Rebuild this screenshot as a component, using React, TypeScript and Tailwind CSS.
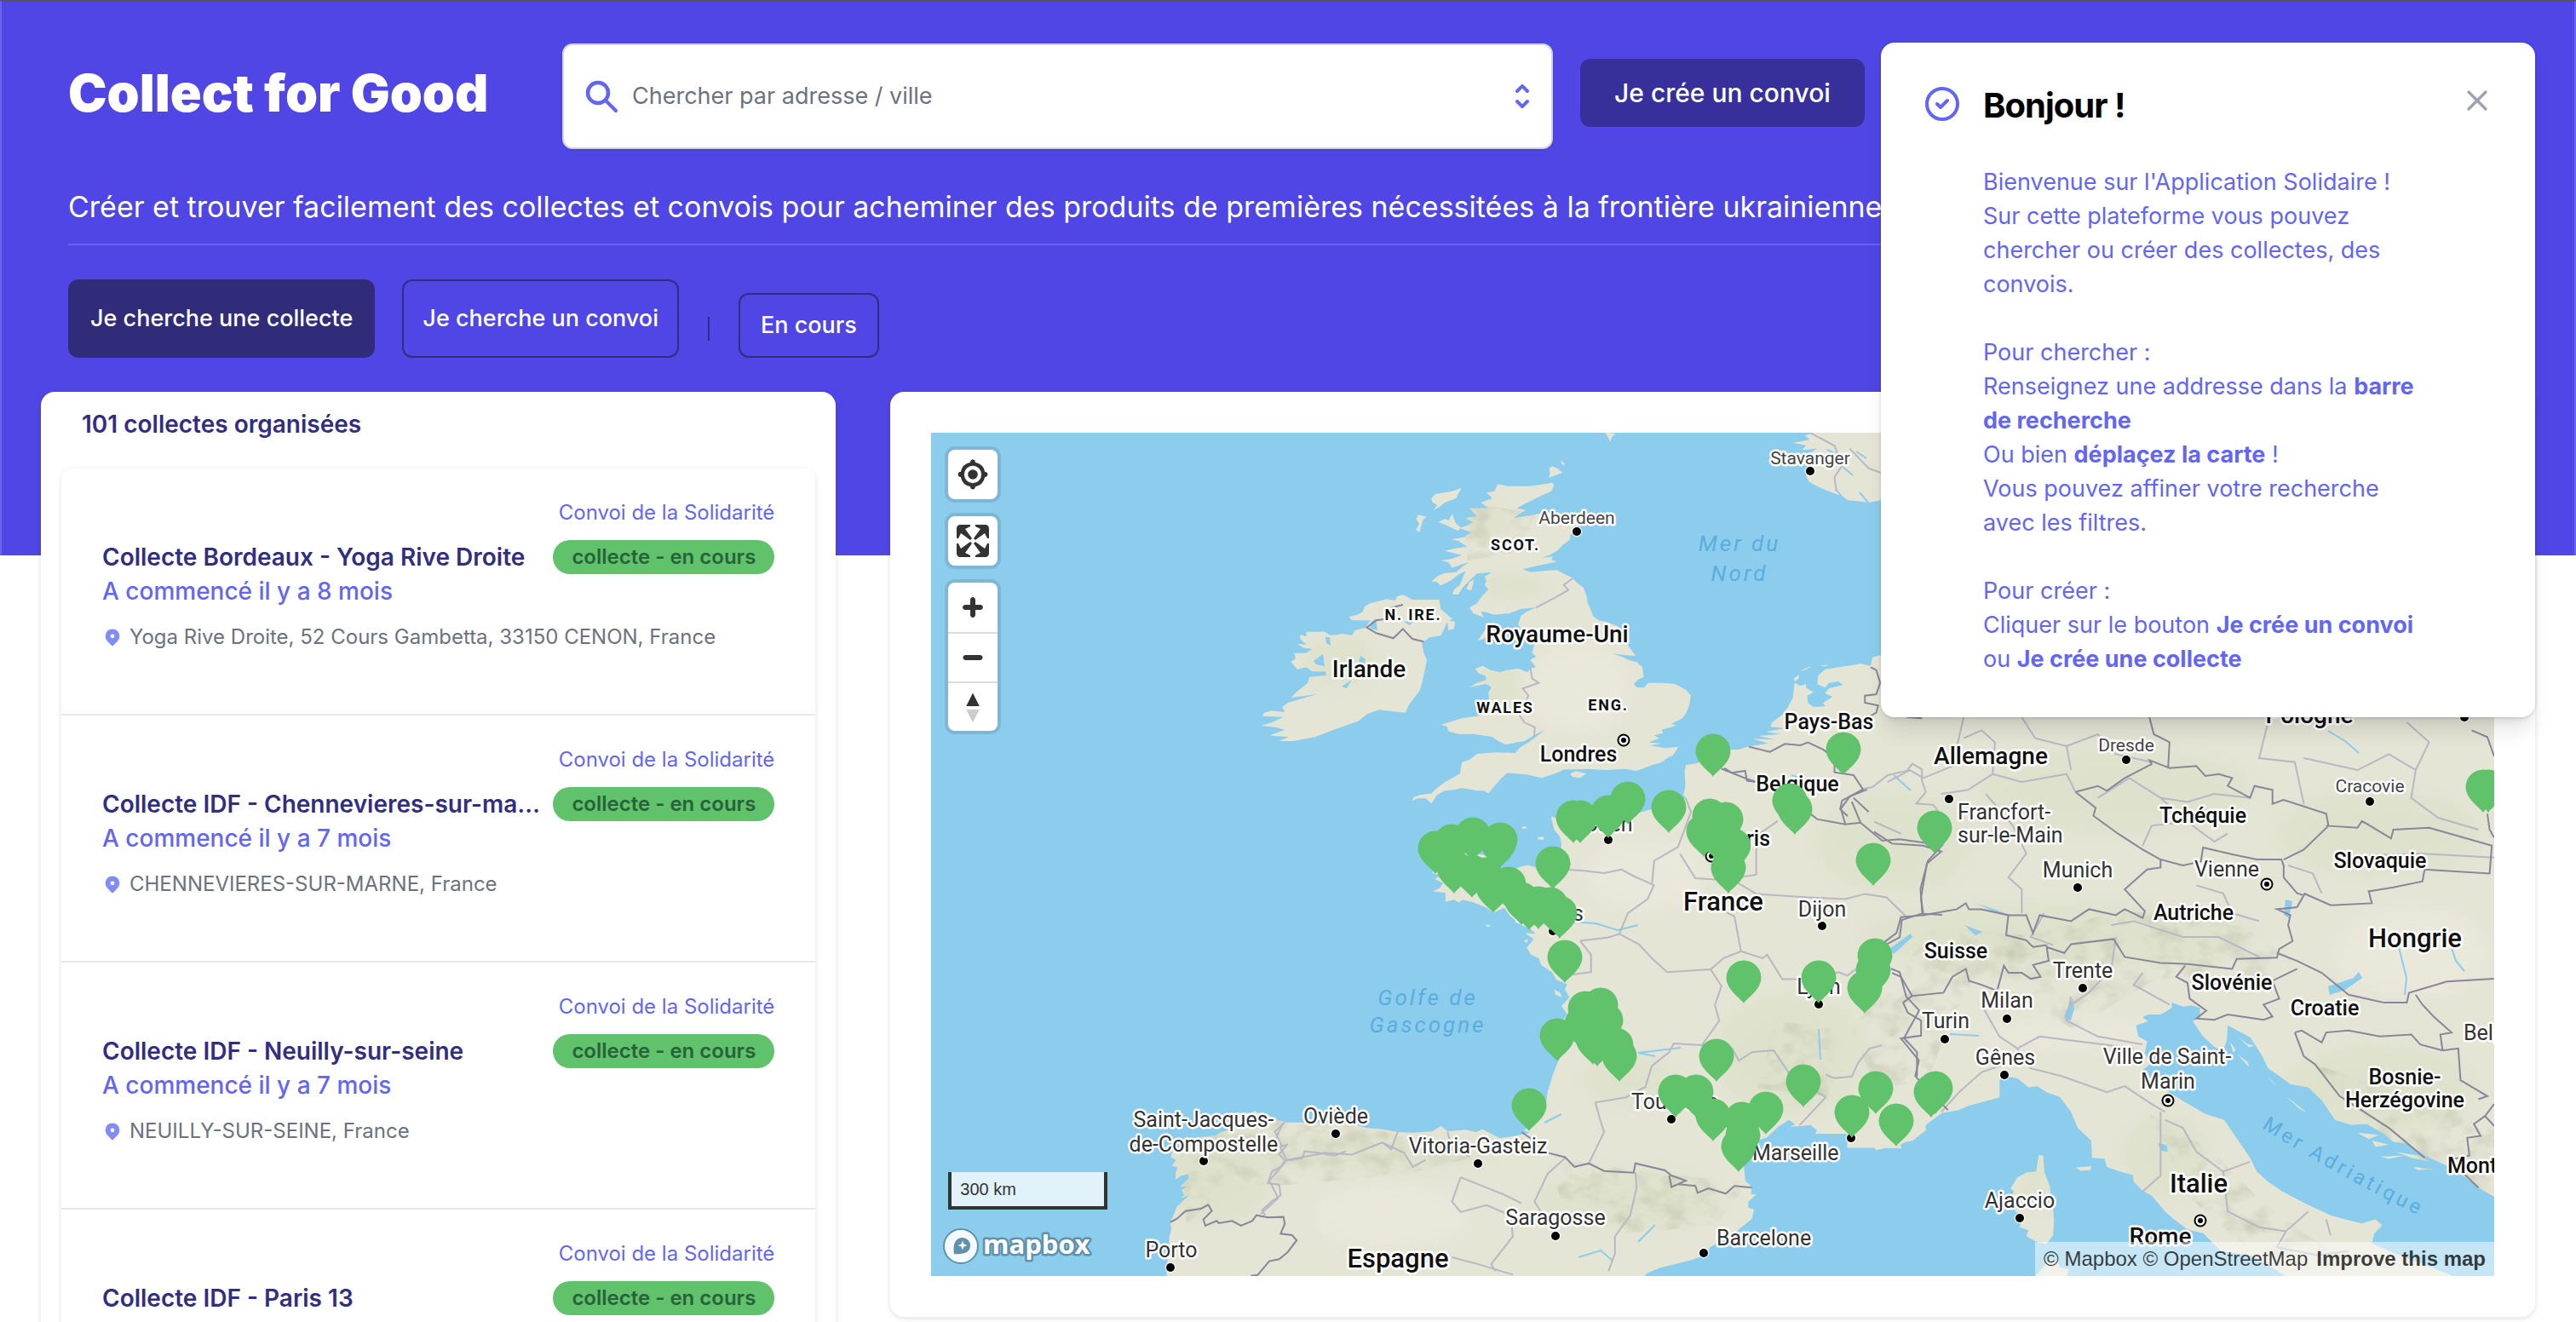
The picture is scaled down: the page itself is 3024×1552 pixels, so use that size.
import { useState } from 'react';
import { HiLocationMarker, HiOutlineCheckCircle, HiOutlineX, HiSelector } from 'react-icons/hi';

interface Collecte {
  id: number;
  title: string;
  started: string;
  address: string;
}

interface MapLabel {
  text: string;
  x: number;
  y: number;
  kind: 'country' | 'medium' | 'small' | 'city' | 'town' | 'region' | 'sea';
  anchor?: 'start' | 'middle' | 'end';
}

const COLLECTES: Collecte[] = [
  {
    id: 1,
    title: 'Collecte Bordeaux - Yoga Rive Droite',
    started: 'A commencé il y a 8 mois',
    address: 'Yoga Rive Droite, 52 Cours Gambetta, 33150 CENON, France',
  },
  {
    id: 2,
    title: 'Collecte IDF - Chennevieres-sur-marne',
    started: 'A commencé il y a 7 mois',
    address: 'CHENNEVIERES-SUR-MARNE, France',
  },
  {
    id: 3,
    title: 'Collecte IDF - Neuilly-sur-seine',
    started: 'A commencé il y a 7 mois',
    address: 'NEUILLY-SUR-SEINE, France',
  },
  {
    id: 4,
    title: 'Collecte IDF - Paris 13',
    started: 'A commencé il y a 7 mois',
    address: 'PARIS 13, France',
  },
];

const LABEL_STYLES = {
  country: 'fill-[#111] stroke-white text-[31px] font-medium',
  medium: 'fill-[#111] stroke-white text-[28px] font-medium',
  small: 'fill-[#111] stroke-white text-[25px] font-medium',
  city: 'fill-[#333] stroke-white text-[25px]',
  town: 'fill-[#444] stroke-white text-[21px]',
  region: 'fill-[#111] stroke-white text-[18px] font-bold tracking-widest',
  sea: 'fill-[#5aaedf] stroke-none text-[26px] italic tracking-[3px]',
};

const LABELS: MapLabel[] = [
  { text: 'Stavanger', x: 1032, y: 37, kind: 'town' },
  { text: 'Aberdeen', x: 758, y: 107, kind: 'town' },
  { text: 'SCOT.', x: 686, y: 138, kind: 'region' },
  { text: 'N. IRE.', x: 566, y: 220, kind: 'region' },
  { text: 'WALES', x: 674, y: 329, kind: 'region' },
  { text: 'ENG.', x: 795, y: 326, kind: 'region' },
  { text: 'Royaume-Uni', x: 735, y: 246, kind: 'medium' },
  { text: 'Irlande', x: 514, y: 287, kind: 'medium' },
  { text: 'Londres', x: 760, y: 386, kind: 'small' },
  { text: 'Mer du', x: 949, y: 139, kind: 'sea' },
  { text: 'Nord', x: 949, y: 174, kind: 'sea' },
  { text: 'Pays-Bas', x: 1054, y: 348, kind: 'small' },
  { text: 'Belgique', x: 1017, y: 421, kind: 'small' },
  { text: 'Allemagne', x: 1244, y: 389, kind: 'medium' },
  { text: 'Caen', x: 795, y: 468, kind: 'city' },
  { text: 'Paris', x: 985, y: 485, kind: 'small', anchor: 'end' },
  { text: 'France', x: 930, y: 561, kind: 'country' },
  { text: 'Dijon', x: 1046, y: 568, kind: 'city' },
  { text: 'Nantes', x: 766, y: 573, kind: 'city', anchor: 'end' },
  { text: 'Lyon', x: 1042, y: 659, kind: 'city' },
  { text: 'Toulouse', x: 822, y: 794, kind: 'city', anchor: 'start' },
  { text: 'Marseille', x: 964, y: 854, kind: 'city', anchor: 'start' },
  { text: 'Golfe de', x: 583, y: 672, kind: 'sea' },
  { text: 'Gascogne', x: 583, y: 704, kind: 'sea' },
  { text: 'Oviède', x: 475, y: 811, kind: 'city' },
  { text: 'Vitoria-Gasteiz', x: 642, y: 846, kind: 'city' },
  { text: 'Saragosse', x: 733, y: 930, kind: 'city' },
  { text: 'Barcelone', x: 922, y: 954, kind: 'city', anchor: 'start' },
  { text: 'Espagne', x: 548, y: 980, kind: 'country' },
  { text: 'Saint-Jacques-', x: 320, y: 815, kind: 'city' },
  { text: 'de-Compostelle', x: 320, y: 844, kind: 'city' },
  { text: 'Porto', x: 282, y: 968, kind: 'city' },
  { text: 'Francfort-', x: 1205, y: 454, kind: 'city', anchor: 'start' },
  { text: 'sur-le-Main', x: 1205, y: 481, kind: 'city', anchor: 'start' },
  { text: 'Dresde', x: 1403, y: 374, kind: 'town' },
  { text: 'Pologne', x: 1618, y: 341, kind: 'medium' },
  { text: 'Cracovie', x: 1689, y: 422, kind: 'town' },
  { text: 'Tchéquie', x: 1493, y: 458, kind: 'small' },
  { text: 'Slovaquie', x: 1701, y: 511, kind: 'small' },
  { text: 'Munich', x: 1346, y: 522, kind: 'city' },
  { text: 'Vienne', x: 1521, y: 521, kind: 'city' },
  { text: 'Autriche', x: 1482, y: 572, kind: 'small' },
  { text: 'Suisse', x: 1203, y: 617, kind: 'small' },
  { text: 'Hongrie', x: 1742, y: 604, kind: 'country' },
  { text: 'Trente', x: 1352, y: 640, kind: 'city' },
  { text: 'Slovénie', x: 1527, y: 654, kind: 'small' },
  { text: 'Croatie', x: 1636, y: 684, kind: 'small' },
  { text: 'Milan', x: 1263, y: 675, kind: 'city' },
  { text: 'Turin', x: 1191, y: 699, kind: 'city' },
  { text: 'Gênes', x: 1261, y: 742, kind: 'city' },
  { text: 'Ville de Saint-', x: 1451, y: 741, kind: 'city' },
  { text: 'Marin', x: 1452, y: 770, kind: 'city' },
  { text: 'Belgrade', x: 1799, y: 713, kind: 'city', anchor: 'start' },
  { text: 'Bosnie-', x: 1730, y: 765, kind: 'small' },
  { text: 'Herzégovine', x: 1730, y: 792, kind: 'small' },
  { text: 'Monténégro', x: 1780, y: 869, kind: 'small', anchor: 'start' },
  { text: 'Italie', x: 1488, y: 892, kind: 'country' },
  { text: 'Rome', x: 1443, y: 953, kind: 'medium' },
  { text: 'Ajaccio', x: 1278, y: 910, kind: 'city' },
];

const TOWNS = [
  [1032, 45], [758, 116], [795, 478], [1046, 579], [730, 585], [1042, 671], [869, 806], [1080, 828],
  [475, 823], [642, 858], [733, 943], [907, 963], [320, 855], [281, 980], [1195, 430], [1403, 384],
  [1800, 334], [1689, 433], [1346, 534], [1352, 652], [1263, 688], [1190, 712], [1260, 754], [1278, 922],
];

const CAPITALS = [[813, 361], [916, 497], [1568, 530], [1452, 784], [1490, 925]];

// Top centre of every pin
const PINS = [
  [918, 354], [1071, 352], [818, 410], [795, 426], [754, 432], [762, 432], [866, 420], [914, 430],
  [933, 434], [907, 448], [922, 452], [942, 465], [936, 491], [1008, 412], [1014, 422], [592, 468],
  [611, 460], [636, 452], [668, 458], [666, 463], [614, 491], [635, 496], [650, 499], [660, 514],
  [678, 510], [693, 528], [702, 534], [713, 533], [730, 486], [727, 534], [738, 544], [744, 596],
  [954, 620], [1042, 620], [1108, 594], [1106, 611], [1096, 632], [1106, 482], [1178, 444], [735, 688],
  [768, 656], [786, 652], [792, 670], [764, 674], [777, 692], [782, 694], [804, 699], [808, 712],
  [922, 712], [702, 770], [874, 754], [898, 754], [918, 782], [952, 786], [980, 774], [953, 805],
  [948, 818], [1024, 742], [1081, 778], [1109, 750], [1133, 788], [1174, 754], [1179, 750], [1822, 396],
  [1828, 396],
];

// The base map is drawn in four sheets, each with its own grid
const SHEETS = {
  north: 'translate(507 -8) scale(.4464 .3333)',
  west: 'translate(387 372) scale(.5102 .4082)',
  east: 'translate(1107 312) scale(.5255 .4668)',
  galicia: 'translate(-13 732) scale(.3333)',
};

function BaseMap() {
  return (
    <svg
      className="absolute inset-0 h-full w-full"
      viewBox="0 0 1835 990"
      preserveAspectRatio="xMinYMin slice"
      role="img"
      aria-label="Carte des collectes"
    >
      <defs>
        <path id="pin" d="M0 50C-3 44-20 35-20.500 20A20.500 20.500 0 0 1 20.500 20C20 35 3 44 0 50Z" />
        <filter id="soft" x="-20%" y="-20%" width="140%" height="140%">
          <feGaussianBlur stdDeviation="9" />
        </filter>
        <filter id="relief" x="0" y="0" width="100%" height="100%">
          <feTurbulence type="fractalNoise" baseFrequency=".035 .05" numOctaves="3" seed="4" />
          <feColorMatrix values="0 0 0 0 .55  0 0 0 0 .57  0 0 0 0 .42  1.600 0 0 0 -.7" />
          <feComposite in2="SourceGraphic" operator="in" />
        </filter>
        <g id="land">
          <g transform={SHEETS.north}>
            <path d="M355 205L380 212 440 212 500 200 502 212 495 230 470 245 440 265 418 280 405 290 428 297 412 310 395 325 440 315 480 305 520 310 548 312 570 320 566 350 560 370 545 385 545 400 525 420 510 440 490 455 470 465 500 460 495 472 510 478 480 487 450 495 420 505 440 515 480 510 510 508 530 522 550 535 565 555 580 570 588 600 590 620 600 650 605 670 620 685 640 690 670 705 680 730 690 750 700 780 718 810 690 808 655 802 680 812 700 825 720 832 735 850 738 885 722 895 712 910 722 922 740 922 750 905 785 905 820 908 850 930 862 950 858 985 850 1010 840 1030 825 1040 810 1050 825 1055 785 1070 790 1082 765 1090 780 1100 750 1115 785 1118 755 1126 795 1135 830 1130 815 1160 800 1170 785 1185 760 1195 720 1215 690 1208 640 1212 590 1208 560 1210 530 1210 505 1225 470 1240 430 1228 380 1222 365 1240 345 1270 330 1295 318 1285 300 1285 260 1275 240 1282 215 1285 195 1300 180 1330 165 1312 145 1312 130 1320 133 1308 150 1300 180 1295 195 1275 215 1255 255 1225 260 1185 280 1175 300 1155 350 1150 400 1152 415 1130 435 1115 455 1095 478 1070 450 1090 425 1110 375 1122 355 1110 340 1095 290 1085 250 1085 225 1075 222 1060 205 1052 235 1040 260 1030 310 1020 335 985 332 965 330 940 338 920 325 908 280 920 300 905 325 895 322 880 305 872 295 855 315 845 335 860 360 868 380 860 410 855 432 868 440 855 455 850 440 825 455 812 445 800 450 770 430 740 415 715 408 700 415 670 430 655 455 640 415 645 385 660 345 665 320 655 310 655 318 675 290 660 280 640 300 625 310 605 330 575 320 560 325 545 320 530 340 515 300 520 280 545 262 570 250 595 235 592 240 575 255 560 270 510 250 525 230 545 205 562 192 548 180 548 195 530 215 518 245 515 262 495 280 480 255 490 235 500 225 480 205 475 235 468 260 455 215 440 240 432 275 425 250 405 232 400 265 392 285 375 255 360 275 350 290 340 270 325 300 318 280 290 330 290 310 270 340 255 325 235 345 230Z" />
            <path d="M105 595L130 612 200 612 205 645 235 680 225 685 242 690 240 715 225 720 222 690 205 738 175 745 155 765 160 800 168 825 158 890 150 930 120 985 112 1010 60 1003 42 1000 11 1015 -13 1040 -77 1070 -125 1095 -181 1110 -221 1110 -195 1095 -235 1092 -245 1090 -205 1070 -229 1062 -268 1055 -240 1045 -209 1025 -265 1022 -260 1010 -240 1003 -205 1008 -213 990 -197 975 -165 962 -120 945 -189 957 -173 935 -145 905 -141 885 -97 878 -97 865 -133 865 -149 850 -173 858 -189 830 -177 820 -181 800 -149 800 -133 785 -155 782 -173 768 -149 770 -165 750 -165 735 -149 742 -149 725 -101 725 -85 738 -53 732 -29 738 -21 720 7 710 19 685 -29 685 -37 672 -15 665 -1 655 5 635 19 625 63 610 85 615 90 600Z" />
            <path d="M260 218L250 240 245 255 215 270 205 282 185 298 195 280 182 268 180 255 190 240 215 235 240 228ZM235 310L240 330 245 345 258 358 250 370 235 360 220 350 198 338 215 328 225 332ZM145 313L168 320 158 330 155 345 148 375 140 365 148 345 140 328ZM490 150L498 142 512 150 525 165 505 175 488 182 492 170ZM520 120L532 135 524 137ZM636 22L665 28 655 38 650 55 645 40ZM325 712L345 718 315 752 302 755ZM545 1225L560 1216 588 1225 570 1240 550 1235ZM292 540L285 580 272 575 280 550Z" />
            <path d="M1185 24L1162 34 1175 48 1130 60 1165 68 1155 85 1195 80 1175 95 1150 105 1200 120 1170 150 1165 175 1172 195 1190 210 1215 225 1240 238 1262 248 1275 262 1300 265 1330 270 1362 262 1700 262 1700 24Z" />
            <path d="M1700 808L1360 808 1340 815 1335 845 1310 838 1250 850 1215 858 1197 880 1195 910 1215 922 1225 905 1250 900 1262 912 1225 925 1215 942 1235 955 1210 975 1215 988 1185 990 1170 975 1168 950 1185 938 1165 922 1165 910 1150 915 1135 905 1130 960 1118 990 1105 1015 1075 1045 1072 1060 1108 1065 1060 1078 1100 1085 1040 1092 1085 1105 1025 1102 1065 1118 1010 1130 965 1150 930 1180 880 1188 848 1195 848 1230 850 1260 842 1300 850 1310 850 1700 1700 1700ZM1133 890L1147 875 1145 890 1136 900ZM1148 865L1165 853 1180 848 1160 860ZM1200 845L1225 841 1215 847Z" />
          </g>
          <g transform={SHEETS.west}>
            <path d="M1700 0L1060 0 1000 42 982 48 975 58 977 100 978 140 950 165 920 180 898 172 870 182 840 195 820 225 790 228 760 215 720 222 695 215 685 200 668 192 672 215 675 230 688 250 692 270 690 290 700 310 715 330 690 340 670 338 640 342 615 332 595 338 580 348 550 340 540 310 500 300 470 305 440 310 400 330 395 355 415 362 400 372 420 384 412 398 396 408 425 412 425 438 445 432 455 440 465 432 490 440 520 455 535 470 560 455 575 480 600 505 620 515 632 530 608 528 628 545 612 570 622 590 640 600 645 620 670 640 680 662 705 675 700 690 710 712 692 738 705 760 690 790 705 830 720 850 690 800 650 790 695 870 683 900 672 935 660 985 655 1030 640 1065 630 1080 605 1095 620 1102 580 1112 550 1118 530 1105 510 1092 495 1100 470 1093 430 1098 415 1082 395 1098 350 1102 315 1100 280 1092 240 1088 200 1072 60 1073 25 1060 5 1045 -60 1045 -60 1530 870 1530 890 1505 920 1490 985 1470 1022 1455 1035 1430 1080 1400 1130 1350 1135 1322 1122 1318 1122 1300 1140 1280 1128 1278 1130 1258 1115 1240 1112 1200 1115 1150 1130 1130 1165 1115 1190 1085 1215 1065 1230 1078 1218 1085 1265 1080 1280 1095 1275 1105 1320 1105 1345 1105 1375 1110 1380 1130 1410 1140 1415 1152 1440 1145 1475 1147 1470 1132 1500 1125 1530 1095 1530 1080 1568 1045 1700 1000ZM600 222L612 222 612 226 602 228ZM638 252L652 252 650 260 638 258ZM515 503L532 506 522 510ZM675 690L690 700 692 712 678 705ZM605 550L615 545 612 556Z" />
          </g>
          <g transform={SHEETS.east}>
            <path d="M-60 -60L1500 -60 1500 1340 1385 1253 1350 1230 1330 1212 1290 1180 1240 1155 1190 1120 1160 1115 1140 1095 1100 1070 1065 1072 1030 1060 1000 1010 970 978 930 970 900 945 880 930 865 895 840 852 790 822 788 860 780 885 762 878 735 850 712 812 728 802 728 778 708 772 690 775 665 765 665 778 640 795 612 795 600 802 612 812 585 822 590 850 610 862 605 890 615 920 600 935 612 955 680 1005 740 1045 782 1060 800 1090 840 1155 855 1190 880 1215 910 1238 960 1268 1020 1300 1060 1312 1090 1320 1120 1310 1135 1325 1118 1345 1112 1370 1150 1390 1220 1420 1290 1451 1310 1480 925 1480 915 1450 880 1425 840 1400 775 1390 735 1345 700 1335 670 1310 650 1290 620 1250 600 1238 580 1215 578 1198 550 1190 520 1178 515 1158 487 1155 485 1112 455 1080 440 1040 415 1002 385 990 365 975 345 978 320 955 292 950 275 965 235 985 222 1018 190 1035 152 1042 110 1065 76 1112 45 1130 0 1130 -60 1130Z" />
            <path d="M368 1148L378 1150 380 1190 392 1225 398 1265 402 1310 400 1350 385 1372 360 1365 340 1352 345 1338 325 1330 335 1300 315 1290 322 1275 305 1262 312 1240 305 1232 320 1205 340 1192 362 1190ZM362 1451L380 1428 395 1410 410 1415 415 1430 435 1436 425 1480 360 1480ZM450 1180L485 1176 483 1186 462 1188ZM795 862L808 885 802 890ZM812 850L835 870 850 872 838 878ZM812 895L835 915 838 928ZM875 945L900 975 915 990 890 965ZM920 1000L965 1040 950 1032ZM1080 1092L1128 1098 1105 1108ZM1112 1112L1150 1122 1120 1128ZM1130 1152L1185 1150 1150 1158ZM1165 1140L1218 1150 1240 1165 1200 1155ZM1205 1178L1250 1184 1215 1186Z" />
          </g>
          <g transform={SHEETS.galicia}>
            <path d="M1280 233L1245 233 1240 215 1215 200 1195 205 1180 192 1165 203 1150 200 1135 215 1105 235 1085 260 1060 268 1040 280 990 285 950 290 920 320 890 335 883 355 903 365 888 385 908 392 900 410 900 435 920 420 945 415 948 428 918 460 940 458 922 472 932 490 915 500 950 488 905 530 895 555 882 585 885 610 878 640 875 700 868 740 870 800 1500 800 1500 233Z" />
          </g>
        </g>
        <mask id="land-mask">
          <use href="#land" fill="white" />
        </mask>
      </defs>

      <use href="#land" className="fill-[#e5e5d6]" />

      {/* Woodland and relief */}
      <g mask="url(#land-mask)">
        <g className="fill-[#dde1ca]" filter="url(#soft)" opacity=".8">
          <ellipse cx="650" cy="105" rx="28" ry="20" />
          <ellipse cx="680" cy="180" rx="40" ry="14" />
          <ellipse cx="665" cy="295" rx="24" ry="30" />
          <ellipse cx="480" cy="270" rx="40" ry="30" />
          <ellipse cx="330" cy="870" rx="70" ry="60" />
          <ellipse cx="500" cy="845" rx="160" ry="20" />
          <ellipse cx="820" cy="900" rx="110" ry="34" />
          <ellipse cx="1010" cy="730" rx="90" ry="70" />
          <ellipse cx="1130" cy="480" rx="90" ry="60" />
          <ellipse cx="1320" cy="590" rx="230" ry="38" />
          <ellipse cx="1390" cy="420" rx="160" ry="50" />
          <ellipse cx="1700" cy="470" rx="120" ry="50" />
          <ellipse cx="1700" cy="770" rx="110" ry="50" />
          <ellipse cx="1450" cy="850" rx="50" ry="50" />
          <ellipse cx="1295" cy="880" rx="14" ry="36" />
          <ellipse cx="820" cy="760" rx="50" ry="30" />
        </g>
        <g className="fill-[#ece8dd]" filter="url(#soft)" opacity=".8">
          <ellipse cx="760" cy="300" rx="60" ry="50" />
          <ellipse cx="840" cy="520" rx="70" ry="40" />
          <ellipse cx="540" cy="920" rx="90" ry="34" />
          <ellipse cx="1340" cy="705" rx="110" ry="16" />
          <ellipse cx="1740" cy="610" rx="90" ry="50" />
        </g>
        <g filter="url(#relief)">
          <path d="M1130 640L1180 580 1290 590 1400 560 1540 580 1600 620 1560 650 1440 640 1340 700 1240 640 1200 680 1170 760 1110 770 1080 700Z" />
          <path d="M720 850L850 870 960 880 920 930 820 940 740 900ZM290 800L460 800 640 850 560 870 340 890 300 930Z" />
          <path d="M1620 740L1740 780 1835 810 1835 900 1740 860ZM1430 800L1500 840 1560 900 1640 960 1560 970 1480 900ZM620 80L710 95 690 140 630 150ZM990 690L1060 700 1060 780 970 770Z" />
        </g>
      </g>

      {/* Lakes and rivers */}
      <g className="fill-[#8ccced]">
        <path d="M1640 650L1670 640 1676 633 1680 640 1660 654 1642 660ZM1125 606L1150 588 1152 592 1130 612ZM1332 680L1340 664 1342 676 1338 690 1330 688ZM1225 552L1250 560 1270 568 1248 562ZM1213 578L1234 586 1226 590ZM1440 834L1450 836 1452 844 1444 843ZM1590 548L1598 550 1594 570 1588 566Z" />
        <path d="M515 224L522 218 524 232 516 230ZM463 240L468 240 469 250 464 247ZM449 268L460 260 462 274 452 272ZM504 262L510 266 508 276 502 270ZM482 298L494 290 488 300ZM555 222L568 220 562 226Z" />
      </g>
      <path
        className="fill-none stroke-[#8ccced] stroke-2"
        d="M750 574L780 576 806 584 830 578M1010 402L1034 410 1036 420M1722 600L1732 640 1730 660M1782 596L1790 620 1800 632M1640 350L1660 362 1676 376M1196 706L1230 708M880 722L830 728 850 732M720 810L740 800M1042 700L1044 736M850 930L830 950M760 968L786 960 800 972M1130 402L1150 420M1052 20L1064 26M1070 40L1082 50M1086 22L1098 30M1062 66L1070 76M1090 70L1100 82"
      />

      {/* Regional borders */}
      <g className="fill-none stroke-[#b9b7c4] stroke-2">
        <g transform={SHEETS.north}>
          <path vectorEffect="non-scaling-stroke" d="M552 537L528 560 540 578 505 605 455 640M440 850L445 890 462 905 420 925 435 950 412 1020 425 1045 452 1062 450 1095M1310 1280L1340 1272 1380 1230 1430 1215 1445 1190 1470 1210 1470 1250 1480 1290 1455 1330 1500 1335 1520 1370M1170 20L1240 70 1260 140 1240 180 1245 230M1280 80L1330 150 1362 165" />
        </g>
        <g transform={SHEETS.west}>
          <path vectorEffect="non-scaling-stroke" d="M700 345L740 348 790 355 830 345 860 365 905 390 890 430 845 470 825 530 870 560 900 600 935 640 1035 632 1060 680 1045 735 1055 780 1015 850 950 845 940 870 900 910 885 970 840 1000 770 1015 780 1060 790 1100 755 1190M978 140L990 180 960 280 905 320 900 390M1190 205L1150 240 1140 290 1140 360 1060 375 1000 370 965 300M1080 370L1140 415 1260 425 1345 430 1390 415 1440 425 1485 480M1060 460L1090 480 1105 580 1155 600 1165 590 1200 660 1260 660 1330 640 1350 650 1370 630M1105 580L1065 600 1035 632M735 550L760 590 760 640 700 650M735 550L800 540 825 530M1015 850L1085 860 1100 895 1130 870 1180 865 1215 930 1250 960 1300 1000 1240 1080M1300 935L1320 945 1360 940 1375 900 1400 860 1430 850M50 1075L35 1120 60 1180 20 1240 40 1290 0 1335M60 1180L150 1160 210 1165 280 1130 300 1150 315 1100M280 1130L330 1160 350 1200 380 1180M460 1230L440 1300 460 1330 520 1310 575 1340 580 1400 555 1440 530 1480 540 1500M460 1230L520 1260 560 1280 600 1305M700 1175L660 1220 630 1300 650 1340 680 1380M862 1215L865 1260 850 1340 815 1400 815 1450 800 1500M430 1100L440 1150 480 1170M440 1460L500 1480 580 1510" />
        </g>
        <g transform={SHEETS.east}>
          <path vectorEffect="non-scaling-stroke" d="M30 210L80 180 110 200 175 170 200 47M200 100L240 80 270 110 265 190 210 230 150 240M265 190L330 210 430 190 450 235M330 47L360 100 430 120 500 90 540 140 620 160M430 120L440 180M310 320L340 390 300 450 330 480 330 540M250 240L310 320M0 310L60 340M500 250L570 200 640 250 700 260 760 240 840 250M600 370L620 320 700 310 760 360 790 340M700 310L640 250M880 60L860 150 940 160 960 265M960 150L1080 180 1150 140 1210 180 1240 110 1190 60M1210 180L1200 250 1260 300 1350 330M720 470L780 490 800 540 860 560M530 570L580 560 690 600 770 600 860 650M540 600L530 680 480 740 440 770M240 770L280 850 320 880 370 850 440 860 510 870 580 880M440 750L430 810 500 850 600 870M600 690L580 720 660 770M320 880L350 930 420 950 520 990 560 975 620 1020 650 1040M640 1040L640 1200 620 1220 600 1240M650 1060L690 1080 720 1140 780 1190 840 1165M780 1190L790 1290 860 1330 920 1340 970 1290M920 1340L900 1380 990 1400 1060 1390M1010 1310L1020 1350M150 1040L190 990 240 940 290 920M380 540L350 600 400 620M1090 395L1220 390 1385 400M925 420L980 440 1000 490" />
        </g>
        <g transform={SHEETS.galicia}>
          <path vectorEffect="non-scaling-stroke" d="M1285 233L1250 265 1275 318 1295 310 1265 345 1285 368 1270 390 1240 405 1225 447 1265 452 1270 490 1240 510 1205 542 1215 560M1265 345L1285 368 1345 360 1355 335 1400 340 1460 350 1500 335" />
        </g>
      </g>

      {/* National borders */}
      <g className="fill-none stroke-[#88879a] stroke-2">
        <g transform={SHEETS.north}>
          <path vectorEffect="non-scaling-stroke" d="M105 630L75 640 60 680 35 685 10 710 35 730 80 748 105 715 130 750 160 760M950 1205L970 1222 1005 1215 1010 1250 1040 1256M1015 1130L1070 1148 1110 1120 1150 1125 1170 1115 1210 1140 1240 1170 1240 1220 1290 1230 1315 1280 1260 1320 1255 1350 1275 1375M1290 1310L1330 1360M1335 850L1350 860 1360 905 1350 945 1320 950 1320 975 1355 985 1350 1010 1310 1040M1430 1025L1470 1030" />
        </g>
        <g transform={SHEETS.west}>
          <path vectorEffect="non-scaling-stroke" d="M1060 55L1120 85 1190 110M1250 170L1280 200 1345 215 1380 210 1430 262 1470 258 1568 275 1535 320 1518 400 1522 472 1568 475M1345 215L1335 170 1355 135 1395 115M1360 150L1380 210M1525 470L1475 490 1470 540 1440 560M1450 630L1470 640 1485 710 1515 750 1480 830 1510 870 1510 940M600 1100L635 1130 655 1158 700 1172 722 1200 755 1190 790 1212 858 1217 862 1190 930 1210 945 1225 978 1240 945 1258 940 1225M960 1250L1000 1255 1005 1275 1030 1262 1070 1277 1090 1255 1130 1260" />
        </g>
        <g transform={SHEETS.east}>
          <path vectorEffect="non-scaling-stroke" d="M0 335L40 365 110 370 150 385 118 415 105 500 110 545 60 550 50 590 20 615M110 545L185 530 205 515 212 530 240 530 300 545 295 595 340 608 355 625 385 620M40 690L60 700 85 748 155 740 175 700 205 680 212 710 240 720 275 735 290 672 300 690 330 690 350 705 372 700 355 670 390 660 385 620M85 748L65 765 75 790 105 810 105 848 60 855 100 910 92 950 165 1035M300 545L340 545 355 590 370 545 440 560 480 530 540 545 560 530 600 552 605 535 560 480 610 430 640 425 640 405 690 420 730 410 735 375 800 392 855 405 910 405 915 420 915 450 945 490 960 495 945 525 900 530 930 545 925 570 935 610 905 630 900 652 810 655 800 680 700 668 640 665 560 650 535 605 440 618 425 640 385 625M450 235L500 220 520 232 560 200 620 165 615 155 660 175 720 170 740 195 770 190 800 200 790 220 840 250 850 220 890 230 890 265 915 255 1010 290 1015 320 960 380 915 405M450 235L495 275 490 295 545 340 600 380 640 405M1010 320L1080 325 1090 308 1130 335 1155 352 1160 330 1240 325 1380 370 1375 440 1230 430 1225 460 1160 475 1105 485 1112 515 1020 520 960 490M900 640L945 660 1000 690 1060 745 1140 765 1190 765 1195 740 1280 712 1385 705M695 672L675 700 700 715 705 755 742 785 720 805 760 808 790 795 870 808 890 800 870 770 905 755 890 710 945 680M940 840L955 835 1000 865 1010 840 1060 835 1130 850 1200 845 1220 870 1270 885 1305 880 1310 960 1370 1000 1350 1008M940 840L960 900 985 920 1040 1000 1150 1080 1230 1155M1210 745L1225 770 1250 800 1290 840 1265 845 1270 885M1385 1020L1365 1050 1385 1075M1365 1050L1340 1070 1355 1100 1325 1105 1330 1150 1285 1160 1350 1230M615 47L625 90 660 110 657 172M1335 80L1370 97 1385 145M1370 290L1375 330 1385 350" />
        </g>
        <g transform={SHEETS.galicia}>
          <path vectorEffect="non-scaling-stroke" d="M882 585L905 572 935 545 990 537 1015 523 1028 545 998 575 1005 597 1045 580 1052 588 1100 580 1130 597 1170 580 1185 560 1225 568 1280 566 1285 590 1270 625 1310 630 1327 648 1295 690 1265 715 1230 722 1190 770 1165 773M1190 770L1180 780" />
        </g>
      </g>

      {/* Towns, capitals and names */}
      {TOWNS.map(([x, y]) => (
        <circle key={`${x}-${y}`} cx={x} cy={y} r="5" className="fill-black stroke-white/70 stroke-[3] [paint-order:stroke]" />
      ))}
      {CAPITALS.map(([x, y]) => (
        <g key={`${x}-${y}`}>
          <circle cx={x} cy={y} r="6.500" className="fill-white stroke-black stroke-2" />
          <circle cx={x} cy={y} r="3" />
        </g>
      ))}
      <g className="font-[Roboto,sans-serif] stroke-[5] [paint-order:stroke] [stroke-linejoin:round]">
        {LABELS.map((label) => (
          <text
            key={label.text}
            x={label.x}
            y={label.y}
            textAnchor={label.anchor ?? 'middle'}
            className={LABEL_STYLES[label.kind]}
          >
            {label.text}
          </text>
        ))}
        <path id="adriatic" d="M1562 816Q1650 872 1765 928" fill="none" stroke="none" />
        <text className="fill-[#5aaedf] stroke-none text-[24px] tracking-[4px]">
          <textPath href="#adriatic">Mer Adriatique</textPath>
        </text>
      </g>

      {/* Pins */}
      <g className="fill-[#60c26b]">
        {PINS.map(([x, y]) => (
          <use key={`${x}-${y}`} href="#pin" x={x} y={y} />
        ))}
      </g>
    </svg>
  );
}

function MapControls() {
  const group = 'flex flex-col overflow-hidden rounded-lg bg-white ring-4 ring-black/10 divide-y-2 divide-[#ddd]';

  return (
    <div className="absolute left-5 top-5 flex flex-col gap-5">
      <div className={group}>
        <button type="button" aria-label="Me localiser">
          <svg viewBox="0 0 20 20" className="size-[58px] fill-[#333]">
            <path d="M10 4C9 4 9 5 9 5v.1A5 5 0 0 0 5.100 9H5s-1 0-1 1 1 1 1 1h.1A5 5 0 0 0 9 14.900v.1s0 1 1 1 1-1 1-1v-.1a5 5 0 0 0 3.900-3.900h.1s1 0 1-1-1-1-1-1h-.1A5 5 0 0 0 11 5.100V5s0-1-1-1zm0 2.500a3.500 3.500 0 1 1 0 7 3.500 3.500 0 1 1 0-7z" />
            <circle cx="10" cy="10" r="2" />
          </svg>
        </button>
      </div>
      <div className={group}>
        <button type="button" aria-label="Plein écran">
          <svg viewBox="0 0 29 29" className="size-[58px] fill-[#333]">
            <path d="M24 16v5.500c0 1.750-.75 2.500-2.500 2.500H16v-1l3-1.500-4-5.500 1-1 5.500 4 1.500-3h1zM6 16l1.500 3 5.500-4 1 1-4 5.500 3 1.500v1H7.500C5.750 24 5 23.250 5 21.500V16h1zm7-11v1l-3 1.500 4 5.500-1 1-5.500-4L6 13H5V7.500C5 5.750 5.750 5 7.500 5H13zm11 2.500c0-1.750-.75-2.500-2.500-2.500H16v1l3 1.500-4 5.500 1 1 5.500-4 1.500 3h1V7.500z" />
          </svg>
        </button>
      </div>
      <div className={group}>
        <button type="button" aria-label="Zoomer">
          <svg viewBox="0 0 29 29" className="size-[58px] fill-[#333]">
            <path d="M14.500 8.500c-.75 0-1.500.75-1.500 1.500v3h-3c-.75 0-1.500.75-1.500 1.500S9.250 16 10 16h3v3c0 .75.75 1.500 1.500 1.500S16 19.750 16 19v-3h3c.75 0 1.500-.75 1.500-1.500S19.750 13 19 13h-3v-3c0-.75-.75-1.500-1.500-1.500z" />
          </svg>
        </button>
        <button type="button" aria-label="Dézoomer">
          <svg viewBox="0 0 29 29" className="h-14 w-[58px] fill-[#333]">
            <path d="M10 13c-.75 0-1.500.75-1.500 1.500S9.250 16 10 16h9c.75 0 1.500-.75 1.500-1.500S19.750 13 19 13h-9z" />
          </svg>
        </button>
        <button type="button" aria-label="Orienter au nord">
          <svg viewBox="0 0 29 29" className="h-14 w-[58px]">
            <path d="M10.500 14l4-8 4 8h-8z" className="fill-[#333]" />
            <path d="M10.500 16l4 8 4-8h-8z" className="fill-[#ccc]" />
          </svg>
        </button>
      </div>
    </div>
  );
}

function CollectMap() {
  return (
    <div className="relative h-full overflow-hidden bg-[#8ccced]">
      <BaseMap />
      <MapControls />
      <div className="absolute bottom-3 left-3 flex flex-col gap-5">
        <div className="ml-2 flex h-11 w-[187px] items-center border-4 border-t-0 border-[#333] bg-white/75 px-2.5 font-['Liberation_Sans',sans-serif] text-xl text-[#333]">
          300 km
        </div>
        <a href="#mapbox" aria-label="mapbox" className="block">
          <svg viewBox="0 0 180 46" className="h-[46px] w-[180px]">
            <circle cx="23" cy="23" r="20" className="fill-white/90 stroke-[#5f91ab] stroke-2" />
            <path d="M15 32C13 20 17 13 25 13A9 9 0 0 1 34 22C34 30 27 33 15 32Z" className="fill-[#5f91ab]" />
            <path d="M25 16.500L26.500 20.500 30.500 22 26.500 23.500 25 27.500 23.500 23.500 19.500 22 23.500 20.500Z" className="fill-white" />
            <text
              x="49"
              y="32"
              className="fill-white stroke-[#5f91ab] stroke-[5] font-['Open_Sans',sans-serif] text-[31px] font-bold [paint-order:stroke] [stroke-linejoin:round]"
            >
              mapbox
            </text>
          </svg>
        </a>
      </div>
      <div className="absolute bottom-0 right-0 flex h-10 items-center gap-2.5 bg-white/50 px-2.5 font-['Liberation_Sans',sans-serif] text-2xl text-black/75">
        <span>
          <a href="#mapbox">© Mapbox</a> <a href="#osm">© OpenStreetMap</a>
        </span>
        <a href="#improve" className="font-bold">
          Improve this map
        </a>
      </div>
    </div>
  );
}

function CollecteItem({ collecte }: { collecte: Collecte }) {
  return (
    <li className="h-[290px] px-12 pt-8">
      <p className="text-right text-[24px] leading-10 text-[#6366f1]">Convoi de la Solidarité</p>
      <div className="mt-3 flex items-center justify-between gap-2">
        <h3 className="truncate text-[28px] font-semibold leading-10 text-[#312e81]">{collecte.title}</h3>
        <span className="shrink-0 rounded-full bg-[#60c26b] px-5.5 text-[24px] font-semibold leading-10 text-[#28623a]">
          collecte - en cours
        </span>
      </div>
      <p className="text-[28px] font-medium leading-10 text-[#6366f1]">{collecte.started}</p>
      <p className="mt-3.5 flex items-center gap-2 text-[24px] leading-10 text-[#6b7280]">
        <HiLocationMarker className="size-6 text-[#818cf8]" />
        {collecte.address}
      </p>
    </li>
  );
}

function WelcomeToast({ onClose }: { onClose: () => void }) {
  return (
    <div
      role="status"
      className="absolute right-12 top-[50px] z-10 flex w-[768px] items-start rounded-2xl bg-white p-12 shadow-xl ring-2 ring-black/5"
    >
      <HiOutlineCheckCircle className="size-12 shrink-0 text-[#6366f1]" />
      <div className="ml-6 w-[530px]">
        <h2 className="text-[40px] font-bold leading-[52px] tracking-tight text-black">Bonjour !</h2>
        <p className="mt-11 text-[27px] leading-10 text-[#6366f1]">
          Bienvenue sur l'Application Solidaire !
          <br />
          Sur cette plateforme vous pouvez chercher ou créer des collectes, des convois.
          <br />
          <br />
          Pour chercher :
          <br />
          Renseignez une addresse dans la <strong>barre de recherche</strong>
          <br />
          Ou bien <strong>déplaçez la carte</strong> !
          <br />
          Vous pouvez affiner votre recherche avec les filtres.
          <br />
          <br />
          Pour créer :
          <br />
          Cliquer sur le bouton <strong>Je crée un convoi</strong>
          <br />
          ou <strong>Je crée une collecte</strong>
        </p>
      </div>
      <button type="button" onClick={onClose} aria-label="Fermer" className="ml-auto text-[#9ca3af]">
        <HiOutlineX className="size-10" />
      </button>
    </div>
  );
}

export default function App() {
  const [toastOpen, setToastOpen] = useState(true);
  const [query, setQuery] = useState('');

  return (
    <div className="relative flex h-screen flex-col overflow-hidden bg-white font-[Inter,sans-serif]">
      <header className="border-x-2 border-t-2 border-x-[#6a63ea] border-t-[#555] bg-[#4f46e5] px-[78px] pb-58 pt-[49px] text-white">
        <div className="flex items-center gap-8">
          <h1 className="mb-2 w-[548px] shrink-0 text-[61px] font-black leading-none">Collect for Good</h1>
          <div className="flex h-[124px] w-[1163px] items-center rounded-xl border-2 border-gray-300 bg-white pl-6 pr-3.5 shadow-sm">
            <svg viewBox="0 0 40 40" className="size-10 shrink-0 fill-none stroke-[#6366f1]">
              <circle cx="16" cy="16" r="12" strokeWidth="4.500" />
              <path d="M25 25L37 37" strokeWidth="4" strokeLinecap="round" />
            </svg>
            <input
              type="text"
              aria-label="Chercher par adresse / ville"
              placeholder="Chercher par adresse / ville"
              value={query}
              onChange={(e) => setQuery(e.target.value)}
              className="ml-4 min-w-0 flex-1 text-[27px] text-gray-900 outline-none placeholder:text-[#6b7280]"
            />
            <HiSelector className="size-10 text-[#6366f1]" />
          </div>
          <button type="button" className="mb-2 h-20 shrink-0 rounded-xl bg-[#37309b] px-10 text-[30px] font-medium">
            Je crée un convoi
          </button>
        </div>
        <p className="mt-10 border-b-2 border-[#6a63ea] pb-[15px] text-[34px] leading-14">
          Créer et trouver facilement des collectes et convois pour acheminer des produits de premières nécessitées à la
          frontière ukrainienne.
        </p>
        <div className="mt-10 flex items-end gap-8 text-[27px] font-medium">
          <button type="button" className="h-[92px] rounded-xl bg-[#302c7a] px-6.5">
            Je cherche une collecte
          </button>
          <button type="button" className="h-[92px] rounded-xl border-2 border-[#312e81] px-5.5">
            Je cherche un convoi
          </button>
          <span className="mx-0.5 mb-5 h-7 w-0.5 bg-[#312e81]" />
          <button type="button" className="h-[76px] rounded-xl border-2 border-[#312e81] px-6">
            En cours
          </button>
        </div>
      </header>

      <main className="-mt-48 grid min-h-0 flex-1 grid-cols-3 grid-rows-[minmax(0,1fr)] gap-16 px-12 pb-1.5">
        <section className="self-start rounded-2xl bg-white px-6 shadow-[0_2px_6px_rgba(0,0,0,0.12)]">
          <h2 className="px-6 pb-8 pt-4.5 text-[28px] font-semibold leading-10 text-[#312e81]">101 collectes organisées</h2>
          <ul className="divide-y-2 divide-gray-200 rounded-xl shadow-[0_2px_6px_rgba(0,0,0,0.12)]">
            {COLLECTES.map((collecte) => (
              <CollecteItem key={collecte.id} collecte={collecte} />
            ))}
          </ul>
        </section>
        <section className="col-span-2 rounded-2xl bg-white p-12 shadow-[0_2px_6px_rgba(0,0,0,0.12)]">
          <CollectMap />
        </section>
      </main>

      {toastOpen && <WelcomeToast onClose={() => setToastOpen(false)} />}
    </div>
  );
}
